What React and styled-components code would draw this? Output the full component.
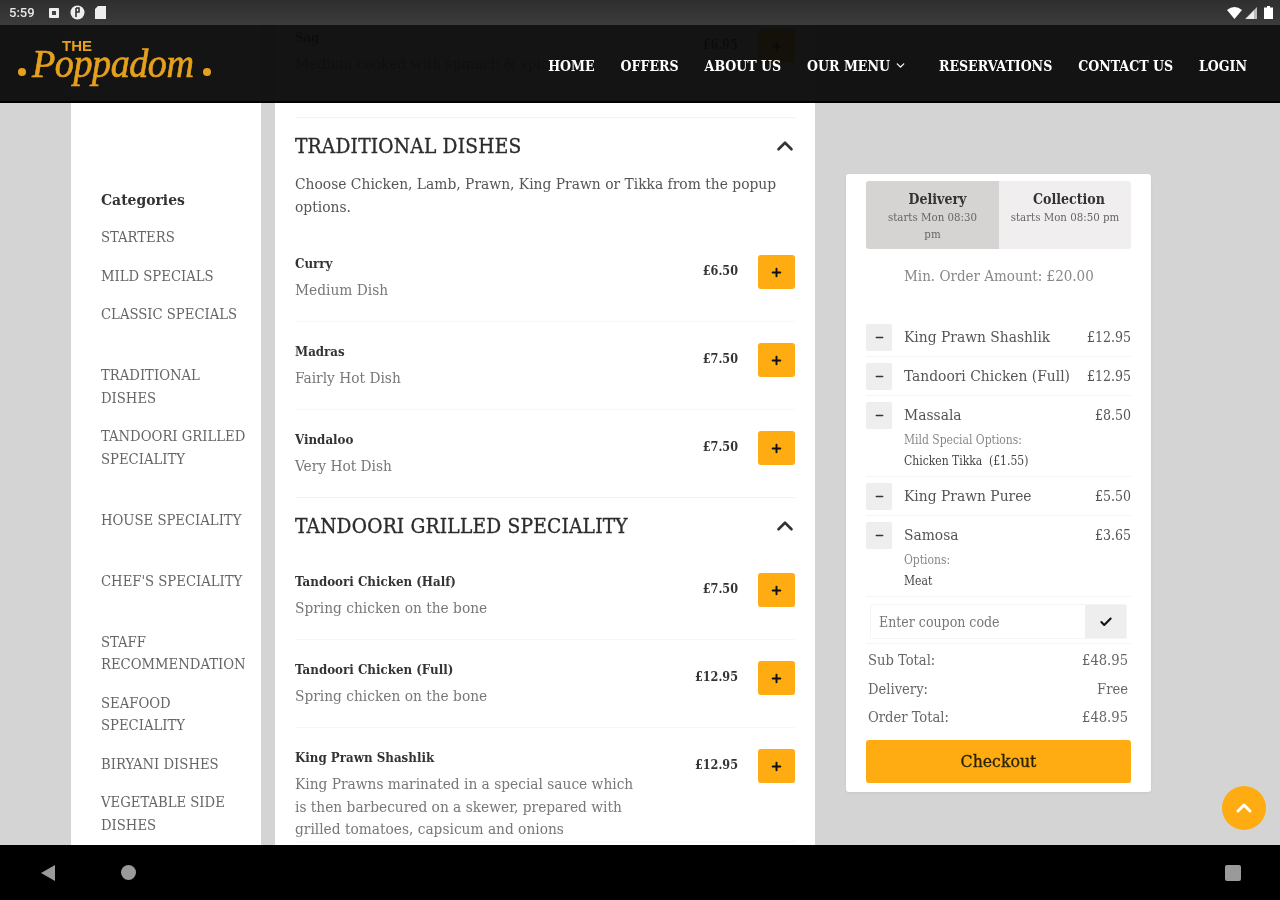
import React from "react";
import styled, { createGlobalStyle } from "styled-components";
import { ChevronDown, ChevronUp, Check, Plus, Minus } from "lucide-react";

const slab = `"DejaVu Serif Condensed", "DejaVu Serif", "Liberation Serif", serif`;

const GlobalStyle = createGlobalStyle`
  html, body { margin: 0; padding: 0; background: #000; }
  body { font-family: ${slab}; }
  * { box-sizing: border-box; }
`;

const Screen = styled.div`
  width: 1280px;
  height: 900px;
  display: flex;
  flex-direction: column;
  overflow: hidden;
  filter: blur(0.45px);
`;

const StatusBar = styled.div`
  height: 25px;
  flex: none;
  display: flex;
  align-items: center;
  padding: 0 7px 0 9px;
  background: linear-gradient(#2f2f2f, #3b3b3b);
  color: #e8e8e8;
  font: 500 13px "Roboto", sans-serif;
`;

const StatusIcons = styled.div`
  display: flex;
  align-items: center;
  gap: 10px;
  margin-left: 13px;
  &:last-child { margin-left: auto; gap: 3px; }
`;

const BatteryIcon = styled.svg`
  margin-left: 4px;
`;

const Stage = styled.div`
  position: relative;
  flex: 1;
  min-height: 0;
  overflow: hidden;
  background: #d4d4d4;
  display: grid;
  grid-template-columns: 190px 540px 305px;
  column-gap: 14px;
  padding-left: 71px;
  align-items: start;
`;

const Header = styled.header`
  position: absolute;
  inset: 0 0 auto 0;
  height: 78px;
  display: flex;
  align-items: center;
  justify-content: space-between;
  padding: 0 33px 0 17px;
  background: rgba(10, 10, 10, 0.96);
  border-bottom: 2px solid #000;
`;

const Logo = styled.div`
  position: relative;
  width: 196px;
  height: 78px;
  color: #e5a11c;
`;

const LogoThe = styled.span`
  position: absolute;
  left: 45px;
  top: 13px;
  font: 700 15px "Liberation Sans", sans-serif;
`;

const LogoScript = styled.span`
  position: absolute;
  left: 15px;
  top: 7px;
  font: italic 400 41px/64px "Liberation Serif", serif;
  -webkit-text-stroke: 0.7px #e5a11c;
  letter-spacing: -0.5px;
  transform: scaleX(0.93);
  transform-origin: left center;
`;

const LogoDot = styled.i`
  position: absolute;
  top: 44px;
  left: ${(p) => p.$left}px;
  width: 8px;
  height: 8px;
  border-radius: 50%;
  background: #e5a11c;
`;

const Nav = styled.nav`
  display: flex;
  align-items: center;
  gap: 26px;
  padding-top: 5px;
`;

const NavLink = styled.a`
  display: flex;
  align-items: center;
  gap: 4px;
  margin-right: ${(p) => (p.$wide ? 6 : 0)}px;
  color: #fff;
  font: 700 14px ${slab};
  white-space: nowrap;
`;

const Sidebar = styled.aside`
  height: 820px;
  background: #fff;
  padding: 164px 0 0 30px;
`;

const SideTitle = styled.h4`
  margin: 0 0 15px;
  font: 700 15.5px/22px ${slab};
  color: #333;
`;

const SideItem = styled.div`
  height: ${(p) => (p.$lines || 1) * 22.5 + 16}px;
  font-size: 14.7px;
  line-height: 22.5px;
  color: #666;
  width: 148px;
`;

const Menu = styled.main`
  height: 820px;
  overflow: hidden;
  background: #fff;
  padding: 0 20px;
`;

const TopDish = styled.div`
  height: 110px;
  margin-top: -17px;
  border-bottom: 1px solid #f3f3f3;
`;

const SectionHead = styled.div`
  display: flex;
  align-items: center;
  justify-content: space-between;
  height: ${(p) => p.$h}px;
  padding-top: ${(p) => p.$pad || 0}px;
  color: #333;
  svg { margin-right: -3px; }
`;

const SectionTitle = styled.h2`
  margin: 0;
  font: 400 20.7px ${slab};
  -webkit-text-stroke: 0.35px #2c2c2c;
  letter-spacing: 0.2px;
  color: #2c2c2c;
`;

const SectionNote = styled.p`
  margin: 0 0 16px;
  font-size: 15.4px;
  line-height: 22.5px;
  color: #555;
`;

const Dish = styled.div`
  display: flex;
  align-items: flex-start;
  min-height: 88px;
  padding-top: 19px;
  border-bottom: 1px solid ${(p) => (p.$last ? "#f3f3f3" : "#f7f7f7")};
`;

const DishText = styled.div`
  width: 348px;
  margin-right: auto;
`;

const DishName = styled.div`
  font: 700 13.2px/22px ${slab};
  color: #333;
`;

const DishDesc = styled.div`
  margin-top: 4px;
  font-size: 15.3px;
  line-height: 22.5px;
  color: #777;
`;

const DishPrice = styled.div`
  margin-top: 8px;
  font: 700 12.5px/20px ${slab};
  color: #333;
  text-align: right;
`;

const AddButton = styled.button`
  width: 37px;
  height: 34px;
  margin: 2px 0 0 20px;
  display: flex;
  align-items: center;
  justify-content: center;
  border: 0;
  border-radius: 3px;
  padding: 0;
  background: #ffab12;
  color: #111;
  flex: none;
`;

const CartColumn = styled.div`
  margin: 149px 0 0 17px;
  width: 305px;
`;

const Cart = styled.section`
  background: #fff;
  border-radius: 3px;
  padding: 7px 20px 9px;
  box-shadow: 0 1px 3px rgba(0, 0, 0, 0.06);
`;

const Tabs = styled.div`
  display: grid;
  grid-template-columns: 133px 132px;
  height: 68px;
  border-radius: 3px;
  overflow: hidden;
`;

const Tab = styled.div`
  padding-top: 8px;
  text-align: center;
  background: ${(p) => (p.$active ? "#d6d3d3" : "#f0eeee")};
`;

const TabTitle = styled.div`
  margin-left: ${(p) => p.$shift || 0}px;
  font: 700 14px/20px ${slab};
  color: #333;
`;

const TabSub = styled.div`
  font-size: 11.4px;
  line-height: 17px;
  color: #666;
  padding: 0 20px;
  white-space: ${(p) => (p.$nowrap ? "nowrap" : "normal")};
  margin: 0 ${(p) => (p.$nowrap ? "-20px" : "0")};
`;

const MinOrder = styled.div`
  margin: 17px 0 38px 38px;
  font-size: 15px;
  line-height: 20px;
  color: #888;
`;

const Line = styled.div`
  display: grid;
  grid-template-columns: 38px 1fr auto;
  padding-bottom: 5px;
  margin-bottom: 6px;
  border-bottom: 1px solid #f4f4f4;
`;

const MinusButton = styled.div`
  width: 26px;
  height: 27px;
  display: flex;
  align-items: center;
  justify-content: center;
  background: #efeeee;
  border-radius: 2px;
  color: #333;
`;

const LineName = styled.div`
  font-size: 15.4px;
  line-height: 27px;
  color: #555;
  white-space: nowrap;
`;

const LinePrice = styled.div`
  font-size: 14px;
  line-height: 27px;
  color: #555;
`;

const Options = styled.div`
  grid-column: 2 / 4;
  margin: 1px 0 -1px;
`;

const OptionLabel = styled.div`
  font-size: 12px;
  line-height: 21px;
  white-space: pre;
  color: ${(p) => (p.$dark ? "#444" : "#888")};
`;

const Coupon = styled.div`
  display: flex;
  height: 35px;
  margin: 7px 4px 4px;
  border: 1px solid #f4f4f4;
  border-radius: 2px;
`;

const CouponInput = styled.input`
  flex: 1;
  min-width: 0;
  border: 0;
  padding: 0 8px;
  outline: none;
  font: 14px ${slab};
  background: #fff;
  &::placeholder { color: #777; opacity: 1; }
`;

const CouponButton = styled.div`
  width: 41px;
  display: flex;
  align-items: center;
  justify-content: center;
  background: #efeeee;
  color: #111;
`;

const Totals = styled.div`
  padding: 2px 3px 0 2px;
  border-top: 1px solid #f4f4f4;
`;

const TotalRow = styled.div`
  display: flex;
  justify-content: space-between;
  font-size: 14.6px;
  line-height: 28.5px;
  color: #666;
`;

const Checkout = styled.button`
  display: block;
  width: 100%;
  height: 43px;
  margin-top: 8px;
  border: 0;
  border-radius: 3px;
  background: #ffab12;
  color: #2a2205;
  font: 400 17.5px ${slab};
  -webkit-text-stroke: 0.3px #2a2205;
`;

const ScrollTop = styled.div`
  position: absolute;
  left: 1222px;
  top: 761px;
  width: 44px;
  height: 44px;
  border-radius: 50%;
  display: flex;
  align-items: center;
  justify-content: center;
  background: #ffab12;
  color: #fff;
`;

const NavBar = styled.div`
  height: 55px;
  flex: none;
  background: #000;
  display: flex;
  align-items: center;
  padding: 0 39px 0 40px;
`;

const NavHome = styled.i`
  width: 15px;
  height: 15px;
  border-radius: 50%;
  background: #9a9a9a;
  margin-left: 65px;
`;

const NavRecent = styled.i`
  width: 16px;
  height: 16px;
  border-radius: 2px;
  background: #9a9a9a;
  margin-left: auto;
`;

const categories = [
  ["STARTERS", 1],
  ["MILD SPECIALS", 1],
  ["CLASSIC SPECIALS", 2],
  ["TRADITIONAL DISHES", 2],
  ["TANDOORI GRILLED SPECIALITY", 3],
  ["HOUSE SPECIALITY", 2],
  ["CHEF'S SPECIALITY", 2],
  ["STAFF RECOMMENDATION", 2],
  ["SEAFOOD SPECIALITY", 2],
  ["BIRYANI DISHES", 1],
  ["VEGETABLE SIDE DISHES", 2],
];

const traditional = [
  ["Curry", "Medium Dish", "£6.50"],
  ["Madras", "Fairly Hot Dish", "£7.50"],
  ["Vindaloo", "Very Hot Dish", "£7.50"],
];

const tandoori = [
  ["Tandoori Chicken (Half)", "Spring chicken on the bone", "£7.50"],
  ["Tandoori Chicken (Full)", "Spring chicken on the bone", "£12.95"],
  [
    "King Prawn Shashlik",
    "King Prawns marinated in a special sauce which is then barbecured on a skewer, prepared with grilled tomatoes, capsicum and onions",
    "£12.95",
  ],
];

function DishRow({ dish, last }) {
  return (
    <Dish $last={last}>
      <DishText>
        <DishName>{dish[0]}</DishName>
        <DishDesc>{dish[1]}</DishDesc>
      </DishText>
      <DishPrice>{dish[2]}</DishPrice>
      <AddButton>
        <Plus size={13} strokeWidth={3.6} />
      </AddButton>
    </Dish>
  );
}

function CartLine({ name, price, options }) {
  return (
    <Line>
      <MinusButton>
        <Minus size={11} strokeWidth={3} />
      </MinusButton>
      <LineName>{name}</LineName>
      <LinePrice>{price}</LinePrice>
      {options && (
        <>
          <span />
          <Options>
            <OptionLabel>{options[0]}</OptionLabel>
            <OptionLabel $dark>{options[1]}</OptionLabel>
          </Options>
        </>
      )}
    </Line>
  );
}

export default function App() {
  return (
    <Screen>
      <GlobalStyle />
      <StatusBar>
        5:59
        <StatusIcons>
          <svg width="12" height="12" viewBox="0 0 12 12">
            <rect x="1" y="1" width="10" height="10" rx="1" fill="#eee" />
            <rect x="4" y="4" width="4" height="4" fill="#444" />
          </svg>
          <svg width="15" height="15" viewBox="0 0 15 15">
            <circle cx="7.5" cy="7.5" r="7" fill="#eee" />
            <path d="M6 3v9M6 3h3v4H6" stroke="#333" strokeWidth="1.6" fill="none" />
          </svg>
          <svg width="11" height="13" viewBox="0 0 11 13">
            <path d="M3 0h8v13H0V3z" fill="#eee" />
          </svg>
        </StatusIcons>
        <StatusIcons>
          <svg width="15" height="12" viewBox="0 0 15 12">
            <path d="M0 3Q7.5-3 15 3L7.5 12z" fill="#fff" />
          </svg>
          <svg width="12" height="12" viewBox="0 0 12 12">
            <path d="M12 0v12H0z" fill="#bbb" />
            <path d="M9 3.5V12H1z" fill="#eee" />
          </svg>
          <BatteryIcon width="9" height="13" viewBox="0 0 9 13">
            <path d="M3 0h3v1.5h3V13H0V1.5h3z" fill="#fff" />
          </BatteryIcon>
        </StatusIcons>
      </StatusBar>
      <Stage>
        <Sidebar>
          <SideTitle>Categories</SideTitle>
          {categories.map(([name, lines]) => (
            <SideItem key={name} $lines={lines}>
              {name}
            </SideItem>
          ))}
        </Sidebar>
        <Menu>
          <TopDish>
            <DishRow
              dish={["Sag", "Medium cooked with spinach & spices", "£6.95"]}
            />
          </TopDish>
          <SectionHead $h={55}>
            <SectionTitle>TRADITIONAL DISHES</SectionTitle>
            <ChevronUp size={26} strokeWidth={2.4} />
          </SectionHead>
          <SectionNote>
            Choose Chicken, Lamb, Prawn, King Prawn or Tikka from the popup
            options.
          </SectionNote>
          {traditional.map((d, i) => (
            <DishRow key={d[0]} dish={d} last={i === 2} />
          ))}
          <SectionHead $h={54} $pad={2}>
            <SectionTitle>TANDOORI GRILLED SPECIALITY</SectionTitle>
            <ChevronUp size={26} strokeWidth={2.4} />
          </SectionHead>
          {tandoori.map((d) => (
            <DishRow key={d[0]} dish={d} />
          ))}
        </Menu>
        <CartColumn>
          <Cart>
            <Tabs>
              <Tab $active>
                <TabTitle $shift={10}>Delivery</TabTitle>
                <TabSub>starts Mon 08:30 pm</TabSub>
              </Tab>
              <Tab>
                <TabTitle $shift={8}>Collection</TabTitle>
                <TabSub $nowrap>starts Mon 08:50 pm</TabSub>
              </Tab>
            </Tabs>
            <MinOrder>Min. Order Amount: £20.00</MinOrder>
            <CartLine name="King Prawn Shashlik" price="£12.95" />
            <CartLine name="Tandoori Chicken (Full)" price="£12.95" />
            <CartLine
              name="Massala"
              price="£8.50"
              options={["Mild Special Options:", "Chicken Tikka  (£1.55)"]}
            />
            <CartLine name="King Prawn Puree" price="£5.50" />
            <CartLine
              name="Samosa"
              price="£3.65"
              options={["Options:", "Meat"]}
            />
            <Coupon>
              <CouponInput placeholder="Enter coupon code" />
              <CouponButton>
                <Check size={14} strokeWidth={3.5} />
              </CouponButton>
            </Coupon>
            <Totals>
              <TotalRow>
                <span>Sub Total:</span>
                <span>£48.95</span>
              </TotalRow>
              <TotalRow>
                <span>Delivery:</span>
                <span>Free</span>
              </TotalRow>
              <TotalRow>
                <span>Order Total:</span>
                <span>£48.95</span>
              </TotalRow>
            </Totals>
            <Checkout>Checkout</Checkout>
          </Cart>
        </CartColumn>
        <Header>
          <Logo>
            <LogoDot $left={1} />
            <LogoThe>THE</LogoThe>
            <LogoScript>Poppadom</LogoScript>
            <LogoDot $left={186} />
          </Logo>
          <Nav>
            <NavLink>HOME</NavLink>
            <NavLink>OFFERS</NavLink>
            <NavLink>ABOUT US</NavLink>
            <NavLink $wide>
              OUR MENU <ChevronDown size={13} strokeWidth={2.4} />
            </NavLink>
            <NavLink>RESERVATIONS</NavLink>
            <NavLink>CONTACT US</NavLink>
            <NavLink>LOGIN</NavLink>
          </Nav>
        </Header>
        <ScrollTop>
          <ChevronUp size={24} strokeWidth={3} />
        </ScrollTop>
      </Stage>
      <NavBar>
        <svg width="16" height="18" viewBox="0 0 16 18">
          <path d="M15 1v16L1 9z" fill="#9a9a9a" />
        </svg>
        <NavHome />
        <NavRecent />
      </NavBar>
    </Screen>
  );
}
